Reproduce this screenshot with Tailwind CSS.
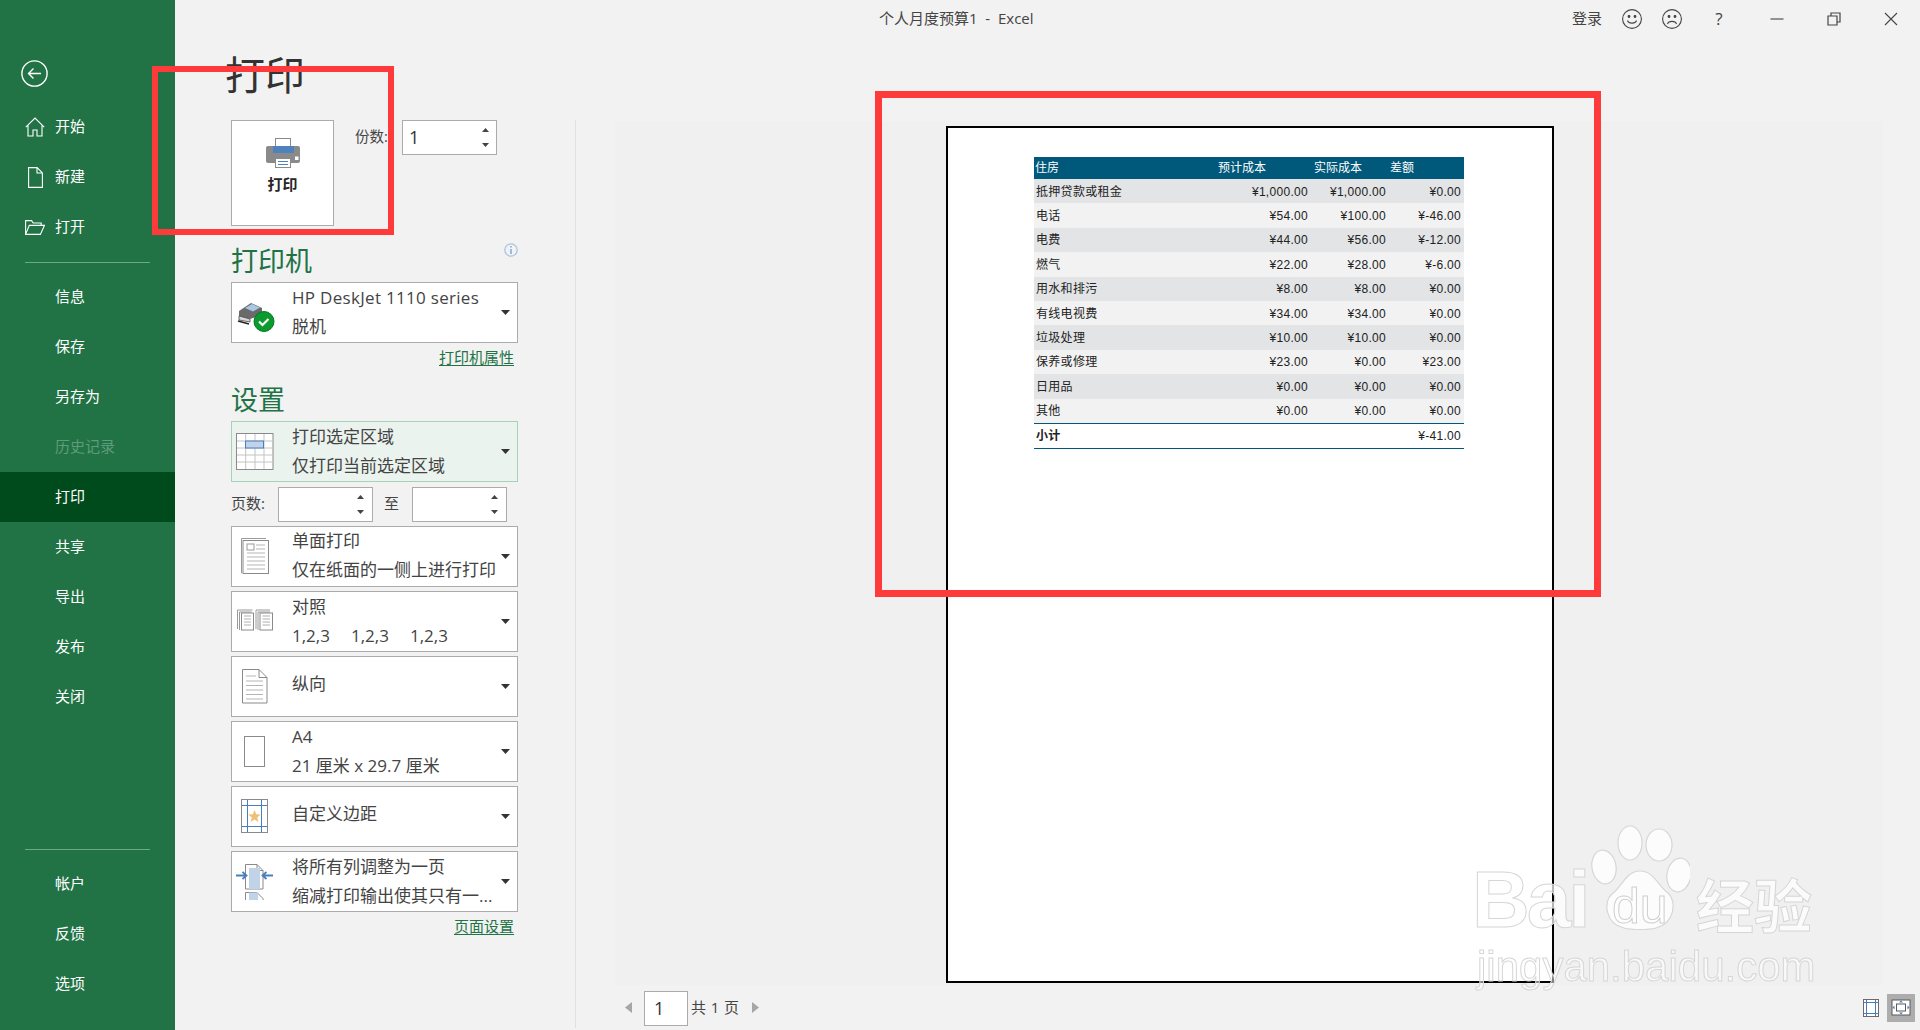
<!DOCTYPE html>
<html lang="zh-CN">
<head>
  <meta charset="UTF-8">
  <title>个人月度预算1 - Excel</title>
  <script src="https://cdn.jsdelivr.net/npm/@tailwindcss/browser@4"></script>
</head>
<body class="bg-[#f2f2f2] overflow-hidden">
<div class="relative flex w-[1920px] h-[1030px] overflow-hidden bg-[#f2f2f2] text-[#444] font-['Open_Sans','Noto_Sans_CJK_SC',sans-serif]">

  <!-- sidebar -->
  <nav class="w-[175px] shrink-0 h-full bg-[#217346] text-white text-[15px] flex flex-col">
    <div class="h-[102px] pt-[60px] pl-[21px]">
      <svg width="27" height="27" viewBox="0 0 27 27" fill="none" stroke="#fff" stroke-width="1.4"><circle cx="13.5" cy="13.5" r="12.6"/><path d="M20 13.5H7.5M12.5 8.5l-5 5 5 5"/></svg>
    </div>
    <div class="h-[50px] flex items-center"><span class="w-[55px] pl-[25px]"><svg width="20" height="20" viewBox="0 0 20 20" fill="none" stroke="#fff" stroke-width="1.1"><path d="M.8 10.2 10 1l9.2 9.2M3 8v11h5v-6h4v6h5V8"/></svg></span><span class="pb-[2px]">开始</span></div>
    <div class="h-[50px] flex items-center"><span class="w-[55px] pl-[28px]"><svg width="15" height="21" viewBox="0 0 15 21" fill="none" stroke="#fff" stroke-width="1.1"><path d="M.6.6h8.5l5.3 5.3v14.5H.6zM9 .6v5.4h5.4"/></svg></span><span class="pb-[2px]">新建</span></div>
    <div class="h-[50px] flex items-center"><span class="w-[55px] pl-[25px]"><svg width="20" height="15" viewBox="0 0 20 15" fill="none" stroke="#fff" stroke-width="1.1"><path d="M.6 14.4V.6h6l1.6 2.4h8v2.5M.6 14.4h14.8l4-9H4.3z"/></svg></span><span class="pb-[2px]">打开</span></div>
    <div class="h-[20px] flex items-center pl-[25px] pr-[25px]"><div class="w-full h-px bg-[#6fa888]"></div></div>
    <div class="h-[50px] flex items-center pl-[55px] pb-[2px]">信息</div>
    <div class="h-[50px] flex items-center pl-[55px] pb-[2px]">保存</div>
    <div class="h-[50px] flex items-center pl-[55px] pb-[2px]">另存为</div>
    <div class="h-[50px] flex items-center pl-[55px] pb-[2px] text-[#5f9c7a]">历史记录</div>
    <div class="h-[50px] flex items-center pl-[55px] pb-[2px] bg-[#004b1c]">打印</div>
    <div class="h-[50px] flex items-center pl-[55px] pb-[2px]">共享</div>
    <div class="h-[50px] flex items-center pl-[55px] pb-[2px]">导出</div>
    <div class="h-[50px] flex items-center pl-[55px] pb-[2px]">发布</div>
    <div class="h-[50px] flex items-center pl-[55px] pb-[2px]">关闭</div>
    <div class="h-[137px] flex items-end pb-[9px] pl-[25px] pr-[25px]"><div class="w-full h-px bg-[#6fa888]"></div></div>
    <div class="h-[50px] flex items-center pl-[55px] pb-[2px]">帐户</div>
    <div class="h-[50px] flex items-center pl-[55px] pb-[2px]">反馈</div>
    <div class="h-[50px] flex items-center pl-[55px] pb-[2px]">选项</div>
  </nav>

  <div class="flex-1 flex flex-col min-w-0">
    <!-- title bar -->
    <header class="h-[40px] shrink-0 flex items-center pb-[3px] text-[15px] text-[#444]">
      <span class="ml-[704px] whitespace-pre">个人月度预算1  -  Excel</span>
      <div class="ml-auto mr-[22px] flex items-center">
        <span class="w-[30px]">登录</span>
        <svg class="ml-[20px]" width="20" height="20" viewBox="0 0 20 20" fill="none" stroke="#444" stroke-width="1.1"><circle cx="10" cy="10" r="9.4"/><circle cx="7" cy="7.5" r=".9" fill="#444"/><circle cx="13" cy="7.5" r=".9" fill="#444"/><path d="M5.5 11.5c1 3.5 8 3.5 9 0"/></svg>
        <svg class="ml-[20px]" width="20" height="20" viewBox="0 0 20 20" fill="none" stroke="#444" stroke-width="1.1"><circle cx="10" cy="10" r="9.4"/><circle cx="7" cy="7.5" r=".9" fill="#444"/><circle cx="13" cy="7.5" r=".9" fill="#444"/><path d="M5.5 15c1-3.5 8-3.5 9 0"/></svg>
        <span class="ml-[32px] w-[10px] text-center text-[17px]">?</span>
        <svg class="ml-[46px]" width="14" height="14" viewBox="0 0 14 14" stroke="#444" stroke-width="1.1"><path d="M.5 7h13"/></svg>
        <svg class="ml-[43px]" width="14" height="14" viewBox="0 0 14 14" fill="none" stroke="#444" stroke-width="1.2"><path d="M1 4h9v9H1zM4 4V1h9v9h-3"/></svg>
        <svg class="ml-[43px]" width="14" height="14" viewBox="0 0 14 14" stroke="#444" stroke-width="1.1"><path d="M1 1l12 12M13 1 1 13"/></svg>
      </div>
    </header>

    <div class="flex-1 flex min-h-0">
      <!-- left panel -->
      <section class="w-[400px] shrink-0 pl-[56px]">
        <h1 class="h-[80px] pb-[10px] -ml-[6px] flex items-center text-[40px] leading-none text-[#333]">打印</h1>
        <div class="flex items-start h-[106px]">
          <div class="w-[103px] h-[106px] bg-white border border-[#ababab] flex flex-col items-center pt-[17px]">
            <svg width="34" height="30" viewBox="0 0 34 30">
              <rect x="9.5" y=".5" width="15" height="13" fill="#fff" stroke="#8a8a8a"/>
              <path d="M2 8h30a2 2 0 0 1 2 2v13a2 2 0 0 1-2 2H2a2 2 0 0 1-2-2V10a2 2 0 0 1 2-2z" fill="#8a8a8a"/>
              <rect x="7" y="8" width="21" height="7" fill="#4f81bd"/>
              <rect x="29" y="18.5" width="3.500" height="3.500" fill="#fff"/>
              <rect x="9.500" y="20.500" width="15" height="9" fill="#fff" stroke="#8a8a8a"/>
              <path d="M12 23.500h10M12 26.500h10" stroke="#4f81bd"/>
            </svg>
            <span class="mt-[5px] text-[15px] leading-[22px] font-bold text-[#262626]">打印</span>
          </div>
          <span class="ml-[21px] mt-[6px] w-[47px] text-[14.5px] leading-[22px] text-[#444]">份数:</span>
          <div class="w-[95px] h-[35px] bg-white border border-[#ababab] flex items-center justify-between pl-[6px] pr-[7px] text-[18px] text-[#333]">
            <span>1</span>
            <span class="flex flex-col gap-[11px]">
              <svg width="7" height="4" viewBox="0 0 7 4"><path d="M3.500 0 7 4H0z" fill="#444"/></svg>
              <svg width="7" height="4" viewBox="0 0 7 4"><path d="M0 0h7L3.500 4z" fill="#444"/></svg>
            </span>
          </div>
        </div>

        <div class="w-[287px] h-[56px] flex items-start justify-between">
          <h2 class="mt-[17px] text-[27px] leading-[35px] text-[#217346]">打印机</h2>
          <svg class="mt-[17px]" width="14" height="14" viewBox="0 0 14 14" fill="none"><circle cx="7" cy="7" r="6.200" stroke="#a9c3e6" stroke-width="1.300"/><path d="M7 6v5M7 3v1.500" stroke="#6f9bd6" stroke-width="1.300"/></svg>
        </div>
        <div class="w-[287px] h-[61px] bg-white border border-[#ababab] flex items-center">
          <span class="w-[60px] pl-[4px] shrink-0">
            <svg width="40" height="40" viewBox="0 0 40 40">
              <path d="M3 18 15 10l11 5v7L14 26 3 23z" fill="#6a6a6a"/>
              <path d="M9 15l7-4 8 3.500-7 4z" fill="#a9c7e2"/>
              <path d="M3 23l11 3v3l-11-2z" fill="#d8d8d8" stroke="#333" stroke-width=".7"/>
              <path d="M2 28l11 3" stroke="#222" stroke-width="1.400"/>
              <circle cx="28" cy="28.500" r="10" fill="#0a9a2e" stroke="#067a22"/>
              <path d="M23 28.500l3.500 3.500 6-6" fill="none" stroke="#fff" stroke-width="2.200"/>
            </svg>
          </span>
          <div class="flex-1 text-[17px] leading-[29px] pb-[2px]"><div class="tracking-[0.3px]">HP DeskJet 1110 series</div><div>脱机</div></div>
          <svg class="mr-[7px]" width="9" height="5" viewBox="0 0 9 5"><path d="M0 0h9L4.500 5z" fill="#333"/></svg>
        </div>
        <div class="w-[287px] h-[30px] flex items-center justify-end pr-[4px] pb-[2px]"><a class="text-[15px] leading-none text-[#217346] underline underline-offset-2">打印机属性</a></div>

        <div class="h-[48px] pt-[9px]"><h2 class="text-[27px] leading-[35px] text-[#217346]">设置</h2></div>
        <div class="w-[287px] h-[61px] bg-[#ebf3ee] border border-[#a9d0b9] flex items-center">
          <span class="w-[60px] pl-[4px] shrink-0">
            <svg width="40" height="40" viewBox="0 0 40 40" fill="none">
              <rect x=".5" y="1.500" width="36.500" height="36" fill="#fff" stroke="#8a8a8a"/>
              <path d="M9.700 2v35M19 2v35M28 2v35M1 9h36M1 16h36M1 23h36M1 30h36" stroke="#c4c4c4"/>
              <rect x="9.500" y="9" width="18" height="7" fill="#c0d3e8" stroke="#4a7ebb"/>
            </svg>
          </span>
          <div class="flex-1 text-[17px] leading-[29px] pb-[2px]"><div>打印选定区域</div><div>仅打印当前选定区域</div></div>
          <svg class="mr-[7px]" width="9" height="5" viewBox="0 0 9 5"><path d="M0 0h9L4.500 5z" fill="#333"/></svg>
        </div>

        <div class="mt-[5px] h-[35px] flex items-center text-[15px]">
          <span class="w-[47px] pb-[2px] text-[#444]">页数:</span>
          <div class="w-[95px] h-[35px] bg-white border border-[#ababab] flex items-center justify-end pr-[8px]">
            <span class="flex flex-col gap-[11px]">
              <svg width="7" height="4" viewBox="0 0 7 4"><path d="M3.500 0 7 4H0z" fill="#444"/></svg>
              <svg width="7" height="4" viewBox="0 0 7 4"><path d="M0 0h7L3.500 4z" fill="#444"/></svg>
            </span>
          </div>
          <span class="ml-[11px] w-[28px] pb-[2px]">至</span>
          <div class="w-[95px] h-[35px] bg-white border border-[#ababab] flex items-center justify-end pr-[8px]">
            <span class="flex flex-col gap-[11px]">
              <svg width="7" height="4" viewBox="0 0 7 4"><path d="M3.500 0 7 4H0z" fill="#444"/></svg>
              <svg width="7" height="4" viewBox="0 0 7 4"><path d="M0 0h7L3.500 4z" fill="#444"/></svg>
            </span>
          </div>
        </div>

        <div class="mt-[4px] flex flex-col gap-[4px] w-[287px]">
          <div class="h-[61px] bg-white border border-[#ababab] flex items-center">
            <span class="w-[60px] pl-[4px] shrink-0">
              <svg width="40" height="40" viewBox="0 0 40 40" fill="none" stroke="#9a9a9a">
                <path d="M5.500 36V1.500H30"/>
                <rect x="7" y="3.500" width="25.500" height="33" fill="#fff" stroke="#8a8a8a"/>
                <rect x="11" y="7" width="7" height="6"/>
                <path d="M20 8h9M20 12h9M11 16h18M11 20h18M11 24h18M11 28h18M11 32h18" stroke="#b5b5b5"/>
              </svg>
            </span>
            <div class="flex-1 text-[17px] leading-[29px] whitespace-nowrap pb-[3px]"><div>单面打印</div><div>仅在纸面的一侧上进行打印</div></div>
            <svg class="mr-[7px] -ml-[10px]" width="9" height="5" viewBox="0 0 9 5"><path d="M0 0h9L4.500 5z" fill="#333"/></svg>
          </div>
          <div class="h-[61px] bg-white border border-[#ababab] flex items-center">
            <span class="w-[60px] pl-[4px] shrink-0">
              <svg width="40" height="40" viewBox="0 0 40 40" fill="none" stroke="#9a9a9a">
                <path d="M1.500 27V8h15M3.500 28V10h12"/>
                <rect x="5.500" y="11" width="12" height="17" fill="#fff" stroke="#8a8a8a"/>
                <path d="M8 14h7M8 17h7M8 20h7M8 23h7" stroke="#b0b0b0"/>
                <path d="M20 27V8h14M22 28V10h12"/>
                <rect x="24" y="11" width="12.500" height="17" fill="#fff" stroke="#8a8a8a"/>
                <path d="M26.500 14h7.500M26.500 17h7.500M26.500 20h7.500M26.500 23h7.500" stroke="#b0b0b0"/>
              </svg>
            </span>
            <div class="flex-1 text-[17px] leading-[29px] pb-[2px]"><div>对照</div><div class="flex gap-[21px]"><span>1,2,3</span><span>1,2,3</span><span>1,2,3</span></div></div>
            <svg class="mr-[7px]" width="9" height="5" viewBox="0 0 9 5"><path d="M0 0h9L4.500 5z" fill="#333"/></svg>
          </div>
          <div class="h-[61px] bg-white border border-[#ababab] flex items-center">
            <span class="w-[60px] pl-[4px] shrink-0">
              <svg width="40" height="40" viewBox="0 0 40 40" fill="none" stroke="#8a8a8a">
                <path d="M6.500 2.500h16.500l8 8v25.500H6.500zM23 2.500v8h8"/>
                <path d="M10 9h10M10 14h17M10 18.500h17M10 23h17M10 27.500h17M10 32h17" stroke="#b5b5b5"/>
              </svg>
            </span>
            <div class="flex-1 text-[17px] leading-[29px] pb-[6px]">纵向</div>
            <svg class="mr-[7px]" width="9" height="5" viewBox="0 0 9 5"><path d="M0 0h9L4.500 5z" fill="#333"/></svg>
          </div>
          <div class="h-[61px] bg-white border border-[#ababab] flex items-center">
            <span class="w-[60px] pl-[4px] shrink-0">
              <svg width="40" height="40" viewBox="0 0 40 40" fill="none"><rect x="8.500" y="4.500" width="20" height="30" stroke="#8a8a8a"/></svg>
            </span>
            <div class="flex-1 text-[17px] leading-[29px] pb-[2px]"><div>A4</div><div>21 厘米 x 29.7 厘米</div></div>
            <svg class="mr-[7px]" width="9" height="5" viewBox="0 0 9 5"><path d="M0 0h9L4.500 5z" fill="#333"/></svg>
          </div>
          <div class="h-[61px] bg-white border border-[#ababab] flex items-center">
            <span class="w-[60px] pl-[4px] shrink-0">
              <svg width="40" height="40" viewBox="0 0 40 40" fill="none">
                <rect x="5.500" y="2.500" width="26" height="33" stroke="#8a8a8a"/>
                <path d="M11.500 3v32M25.500 3v32M6 8.500h25M6 29.500h25" stroke="#4a7ebb"/>
                <path d="M18.500 13l1.700 4.300 4.500.3-3.500 2.900 1.200 4.500-3.900-2.500-3.900 2.500 1.200-4.500-3.500-2.900 4.500-.3z" fill="#f0c078"/>
              </svg>
            </span>
            <div class="flex-1 text-[17px] leading-[29px] pb-[6px]">自定义边距</div>
            <svg class="mr-[7px]" width="9" height="5" viewBox="0 0 9 5"><path d="M0 0h9L4.500 5z" fill="#333"/></svg>
          </div>
          <div class="h-[61px] bg-white border border-[#ababab] flex items-center">
            <span class="w-[60px] pl-[4px] shrink-0">
              <svg width="40" height="40" viewBox="0 0 40 40" fill="none">
                <path d="M9.500 27V2.500H21l6 6V27z" fill="#fff" stroke="#8a8a8a"/>
                <path d="M21 2.500v6h6" stroke="#8a8a8a"/>
                <rect x="13" y="6" width="11" height="21" fill="#c0d3e8"/>
                <path d="M9.500 38v-7.500H21l6 6V38" fill="#fff" stroke="#8a8a8a"/>
                <rect x="13" y="30.500" width="9" height="7.500" fill="#c0d3e8"/>
                <path d="M0 13.500h10M6.500 10l4 3.500-4 3.500M37 13.500H27M30.500 10l-4 3.500 4 3.500" stroke="#4a7ebb" stroke-width="1.800"/>
              </svg>
            </span>
            <div class="flex-1 min-w-0 text-[17px] leading-[29px] whitespace-nowrap pb-[2px]"><div>将所有列调整为一页</div><div>缩减打印输出使其只有一...</div></div>
            <svg class="mr-[7px] -ml-[10px]" width="9" height="5" viewBox="0 0 9 5"><path d="M0 0h9L4.500 5z" fill="#333"/></svg>
          </div>
        </div>
        <div class="w-[287px] h-[30px] flex items-center justify-end pr-[4px] pb-[2px]"><a class="text-[15px] leading-none text-[#217346] underline underline-offset-2">页面设置</a></div>
      </section>

      <!-- preview -->
      <section class="flex-1 mt-[80px] h-[908px] border-l border-[#e1e1e1] flex flex-col">
        <div class="ml-[38px] mr-[37px] mt-px h-[864px] bg-[#f0f0f0] pt-[5px]">
          <div class="ml-[332px] w-[608px] h-[857px] bg-white border-2 border-black pt-[29px] pl-[86px] text-[12px] text-[#222] font-['Liberation_Sans','Noto_Sans_CJK_SC',sans-serif]">
            <div class="w-[430px]">
              <div class="h-[22px] flex items-center pl-[1px] bg-[#00587a] text-white">
                <span class="w-[183px]">住房</span><span class="w-[96px]">预计成本</span><span class="w-[76px]">实际成本</span><span>差额</span>
              </div>
              <div class="h-[24.4px] flex items-center pl-[2px] pr-[3px] pt-px bg-[#e2e4e6] tracking-[0.3px]"><span class="flex-1">抵押贷款或租金</span><span class="w-[78px] text-right">¥1,000.00</span><span class="w-[78px] text-right">¥1,000.00</span><span class="w-[75px] text-right">¥0.00</span></div>
              <div class="h-[24.4px] flex items-center pl-[2px] pr-[3px] pt-px bg-[#f2f2f2] tracking-[0.3px]"><span class="flex-1">电话</span><span class="w-[78px] text-right">¥54.00</span><span class="w-[78px] text-right">¥100.00</span><span class="w-[75px] text-right">¥-46.00</span></div>
              <div class="h-[24.4px] flex items-center pl-[2px] pr-[3px] pt-px bg-[#e2e4e6] tracking-[0.3px]"><span class="flex-1">电费</span><span class="w-[78px] text-right">¥44.00</span><span class="w-[78px] text-right">¥56.00</span><span class="w-[75px] text-right">¥-12.00</span></div>
              <div class="h-[24.4px] flex items-center pl-[2px] pr-[3px] pt-px bg-[#f2f2f2] tracking-[0.3px]"><span class="flex-1">燃气</span><span class="w-[78px] text-right">¥22.00</span><span class="w-[78px] text-right">¥28.00</span><span class="w-[75px] text-right">¥-6.00</span></div>
              <div class="h-[24.4px] flex items-center pl-[2px] pr-[3px] pt-px bg-[#e2e4e6] tracking-[0.3px]"><span class="flex-1">用水和排污</span><span class="w-[78px] text-right">¥8.00</span><span class="w-[78px] text-right">¥8.00</span><span class="w-[75px] text-right">¥0.00</span></div>
              <div class="h-[24.4px] flex items-center pl-[2px] pr-[3px] pt-px bg-[#f2f2f2] tracking-[0.3px]"><span class="flex-1">有线电视费</span><span class="w-[78px] text-right">¥34.00</span><span class="w-[78px] text-right">¥34.00</span><span class="w-[75px] text-right">¥0.00</span></div>
              <div class="h-[24.4px] flex items-center pl-[2px] pr-[3px] pt-px bg-[#e2e4e6] tracking-[0.3px]"><span class="flex-1">垃圾处理</span><span class="w-[78px] text-right">¥10.00</span><span class="w-[78px] text-right">¥10.00</span><span class="w-[75px] text-right">¥0.00</span></div>
              <div class="h-[24.4px] flex items-center pl-[2px] pr-[3px] pt-px bg-[#f2f2f2] tracking-[0.3px]"><span class="flex-1">保养或修理</span><span class="w-[78px] text-right">¥23.00</span><span class="w-[78px] text-right">¥0.00</span><span class="w-[75px] text-right">¥23.00</span></div>
              <div class="h-[24.4px] flex items-center pl-[2px] pr-[3px] pt-px bg-[#e2e4e6] tracking-[0.3px]"><span class="flex-1">日用品</span><span class="w-[78px] text-right">¥0.00</span><span class="w-[78px] text-right">¥0.00</span><span class="w-[75px] text-right">¥0.00</span></div>
              <div class="h-[24.4px] flex items-center pl-[2px] pr-[3px] pt-px bg-[#f2f2f2] tracking-[0.3px]"><span class="flex-1">其他</span><span class="w-[78px] text-right">¥0.00</span><span class="w-[78px] text-right">¥0.00</span><span class="w-[75px] text-right">¥0.00</span></div>
              <div class="h-[26px] flex items-center pl-[2px] pr-[3px] border-y border-[#00587a] tracking-[0.3px]"><span class="flex-1 font-bold">小计</span><span class="w-[75px] text-right">¥-41.00</span></div>
            </div>
          </div>
        </div>
        <footer class="flex-1 flex items-start">
          <svg class="ml-[49px] mt-[17px]" width="7" height="11" viewBox="0 0 7 11"><path d="M7 0v11L0 5.500z" fill="#a6a6a6"/></svg>
          <div class="ml-[12px] mt-[6px] w-[44px] h-[35px] bg-white border border-[#ababab] flex items-center pl-[9px] text-[18px] text-[#333]">1</div>
          <span class="ml-[3px] mt-[11px] w-[48px] flex justify-between text-[15px] leading-[22px]"><span>共</span><span>1</span><span>页</span></span>
          <svg class="ml-[13px] mt-[17px]" width="7" height="11" viewBox="0 0 7 11"><path d="M0 0v11l7-5.500z" fill="#a6a6a6"/></svg>
          <div class="ml-auto mr-[5px] mt-[9px] flex items-center gap-[8px]">
            <svg width="16" height="18" viewBox="0 0 16 18" fill="none">
              <rect x=".5" y=".5" width="15" height="17" fill="#fff" stroke="#6a6a6a"/>
              <path d="M3.500 1v16M12.500 1v16M1 3.500h14M1 14.500h14" stroke="#4a7ebb"/>
            </svg>
            <div class="w-[28px] h-[28px] bg-[#adadad] flex items-center justify-center">
              <svg width="20" height="18" viewBox="0 0 20 18" fill="none">
                <rect x="1" y="1" width="18" height="15" fill="#fff" stroke="#5a5a5a"/>
                <rect x="5.500" y="5" width="9" height="7" fill="#fff" stroke="#5a5a5a"/>
                <path d="M10 1.500l-2 2h4zM10 15.500l-2-2h4zM1.500 8.500l2-2v4zM18.500 8.500l-2-2v4z" fill="#4a7ebb"/>
              </svg>
            </div>
          </div>
        </footer>
      </section>
    </div>
  </div>

  <!-- red annotations drawn over the screenshot -->
  <div class="absolute left-[152px] top-[66px] w-[242px] h-[169px] border-[6.5px] border-[#ff3a3a]"></div>
  <div class="absolute left-[875px] top-[91px] w-[726px] h-[506px] border-[7px] border-[#ff3a3a]"></div>

  <!-- watermark -->
  <div class="absolute left-[1472px] top-[860px] h-[80px] flex items-center text-white/70 font-bold font-['Liberation_Sans',sans-serif] [-webkit-text-stroke:1px_#d6d6d6] text-[80px] leading-none tracking-[-3px] blur-[0.4px]">Bai</div>
  <svg class="absolute left-[1590px] top-[824px] blur-[0.4px]" width="100" height="115" viewBox="0 0 100 115" fill="#fff" fill-opacity=".8" stroke="#d6d6d6" stroke-width="1.200">
    <ellipse cx="40" cy="19" rx="12" ry="17"/>
    <ellipse cx="69" cy="21" rx="13" ry="16"/>
    <ellipse cx="14" cy="43" rx="12" ry="17" transform="rotate(-10 14 43)"/>
    <ellipse cx="89" cy="51" rx="12" ry="17" transform="rotate(10 89 51)"/>
    <path d="M50 47c14 0 18 15 28 22 9 8 7 30-12 35-8 2-24 2-32 0C15 100 13 77 22 70c10-7 14-23 28-23z"/>
  </svg>
  <div class="absolute left-[1612px] top-[881px] h-[50px] flex items-center text-[50px] leading-none text-white/60 font-['Liberation_Sans',sans-serif] [-webkit-text-stroke:1px_#cfcfcf] blur-[0.4px]">du</div>
  <div class="absolute left-[1696px] top-[870px] h-[66px] flex items-center text-[58px] leading-none font-bold text-white/70 font-['Noto_Sans_CJK_SC',sans-serif] [-webkit-text-stroke:1px_#d6d6d6] blur-[0.4px]">经验</div>
  <div class="absolute left-[1477px] top-[942px] h-[50px] flex items-center text-[42px] leading-none text-white/50 font-['Liberation_Sans',sans-serif] [-webkit-text-stroke:1px_#d6d6d6] blur-[0.4px]">jingyan.baidu.com</div>
</div>
</body>
</html>
